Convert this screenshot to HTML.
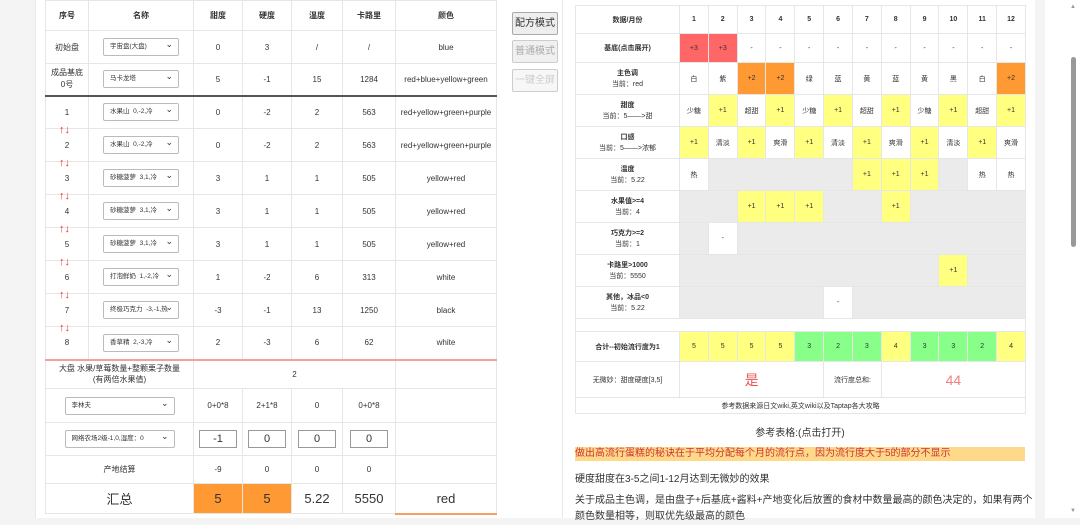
<!DOCTYPE html>
<html><head><meta charset="utf-8"><style>
*{box-sizing:border-box;margin:0;padding:0}
body{width:1080px;height:518px;overflow:hidden;background:#f4f4f4;font-family:"Liberation Sans","Noto Sans CJK SC",sans-serif;color:#333;position:relative}
.panel{position:absolute;background:#fff}
table{border-collapse:collapse;table-layout:fixed;position:absolute}
td{border:1px solid #e6e6e6;text-align:center;font-size:8px;padding:0;overflow:hidden;white-space:nowrap}
.sel{display:inline-block;width:76px;height:18px;border:1px solid #bbb;border-radius:2px;font-size:6.5px;text-align:left;padding-left:6px;line-height:16px;position:relative;background:#fff;color:#333}
.sel:after{content:"⌄";position:absolute;right:5px;top:-3px;font-size:9px}
.arr{position:absolute;left:59px;color:#e33;font-size:11px;line-height:11px}
.inp{display:inline-block;width:38px;height:18px;border:1px solid #999;font-size:11px;line-height:16px}
.y{background:#ffff80}.o{background:#ff9933}.r{background:#ff6666}.g{background:#88ff88}.gr{background:#ebebeb}
.btn{position:absolute;left:512px;width:46px;height:23px;border:1px solid #ccc;background:#f0f0f0;font-size:10px;text-align:center;line-height:21px;color:#aaa;border-radius:2px}
b{font-weight:bold}
.rt td{font-size:7px}
</style></head><body>
<div class="panel" style="left:35px;top:0;width:470px;height:518px;border-left:1px solid #e8e8e8"></div>
<div class="panel" style="left:505px;top:0;width:530px;height:518px"></div>
<div style="position:absolute;left:562px;top:0;width:1px;height:518px;background:#e8e8e8"></div>
<div class="panel" style="left:1045px;top:0;width:35px;height:518px"></div>
<div style="position:absolute;left:1071px;top:57px;width:5px;height:190px;background:#999;border-radius:3px"></div>
<div style="position:absolute;left:1070px;top:4px;font-size:6px;color:#999">▲</div>
<div style="position:absolute;left:1070px;top:508px;font-size:6px;color:#999">▼</div>

<table style="left:45px;top:0;width:451px">
<colgroup><col style="width:43px"><col style="width:105px"><col style="width:49px"><col style="width:49px"><col style="width:51px"><col style="width:53px"><col style="width:101px"></colgroup>
<tr style="height:30px"><td><b>序号</b></td><td><b>名称</b></td><td><b>甜度</b></td><td><b>硬度</b></td><td><b>温度</b></td><td><b>卡路里</b></td><td><b>颜色</b></td></tr>
<tr style="height:33px"><td>初始盘</td><td><span class="sel">宇宙盘(大盘)</span></td><td>0</td><td>3</td><td>/</td><td>/</td><td>blue</td></tr>
<tr style="height:32px;border-bottom:2px solid #555"><td style="line-height:12px">成品基底<br>0号</td><td><span class="sel">马卡龙塔</span></td><td>5</td><td>-1</td><td>15</td><td>1284</td><td>red+blue+yellow+green</td></tr>
<tr style="height:33px"><td>1</td><td><span class="sel">水果山&nbsp; 0,-2,冷</span></td><td>0</td><td>-2</td><td>2</td><td>563</td><td>red+yellow+green+purple</td></tr>
<tr style="height:33px"><td>2</td><td><span class="sel">水果山&nbsp; 0,-2,冷</span></td><td>0</td><td>-2</td><td>2</td><td>563</td><td>red+yellow+green+purple</td></tr>
<tr style="height:33px"><td>3</td><td><span class="sel">砂糖菠萝&nbsp; 3,1,冷</span></td><td>3</td><td>1</td><td>1</td><td>505</td><td>yellow+red</td></tr>
<tr style="height:33px"><td>4</td><td><span class="sel">砂糖菠萝&nbsp; 3,1,冷</span></td><td>3</td><td>1</td><td>1</td><td>505</td><td>yellow+red</td></tr>
<tr style="height:33px"><td>5</td><td><span class="sel">砂糖菠萝&nbsp; 3,1,冷</span></td><td>3</td><td>1</td><td>1</td><td>505</td><td>yellow+red</td></tr>
<tr style="height:33px"><td>6</td><td><span class="sel">打泡鲜奶&nbsp; 1,-2,冷</span></td><td>1</td><td>-2</td><td>6</td><td>313</td><td>white</td></tr>
<tr style="height:33px"><td>7</td><td><span class="sel">终极巧克力&nbsp; -3,-1,热</span></td><td>-3</td><td>-1</td><td>13</td><td>1250</td><td>black</td></tr>
<tr style="height:33px;border-bottom:2px solid #f4a0a0"><td>8</td><td><span class="sel">香草精&nbsp; 2,-3,冷</span></td><td>2</td><td>-3</td><td>6</td><td>62</td><td>white</td></tr>
<tr style="height:29px"><td colspan="2" style="line-height:11px">大盘 水果/草莓数量+整颗栗子数量<br>(有两倍水果值)</td><td colspan="4">2</td><td></td></tr>
<tr style="height:34px"><td colspan="2"><span class="sel" style="width:110px">李林夫</span></td><td>0+0*8</td><td>2+1*8</td><td>0</td><td>0+0*8</td><td></td></tr>
<tr style="height:33px"><td colspan="2"><span class="sel" style="width:110px">网络农场2级-1,0,湿度：0</span></td><td><span class="inp">-1</span></td><td><span class="inp">0</span></td><td><span class="inp">0</span></td><td><span class="inp">0</span></td><td></td></tr>
<tr style="height:28px"><td colspan="2">产地结算</td><td>-9</td><td>0</td><td>0</td><td>0</td><td></td></tr>
<tr style="height:30px"><td colspan="2" style="font-size:13px">汇总</td><td class="o" style="font-size:13px">5</td><td class="o" style="font-size:13px">5</td><td style="font-size:13px">5.22</td><td style="font-size:13px">5550</td><td style="font-size:13px;border-bottom:2px solid #f4a060">red</td></tr>
</table>
<div class="arr" style="top:125px">↑↓</div><div class="arr" style="top:158px">↑↓</div><div class="arr" style="top:191px">↑↓</div><div class="arr" style="top:224px">↑↓</div><div class="arr" style="top:257px">↑↓</div><div class="arr" style="top:290px">↑↓</div><div class="arr" style="top:323px">↑↓</div>

<div class="btn" style="top:12px;color:#333;background:#eee;border-color:#aaa">配方模式</div>
<div class="btn" style="top:40px">普通模式</div>
<div class="btn" style="top:69px;background:#f7f7f7;color:#ccc">一键全屏</div>

<table class="rt" style="left:575px;top:5px;width:450px">
<colgroup><col style="width:104px"><col span="12" style="width:28.83px"></colgroup>
<tr style="height:28px"><td><b>数据/月份</b></td><td><b>1</b></td><td><b>2</b></td><td><b>3</b></td><td><b>4</b></td><td><b>5</b></td><td><b>6</b></td><td><b>7</b></td><td><b>8</b></td><td><b>9</b></td><td><b>10</b></td><td><b>11</b></td><td><b>12</b></td></tr>
<tr style="height:29px"><td><b>基底(点击展开)</b></td><td class="r">+3</td><td class="r">+3</td><td>-</td><td>-</td><td>-</td><td>-</td><td>-</td><td>-</td><td>-</td><td>-</td><td>-</td><td>-</td></tr>
<tr style="height:32px"><td style="line-height:11px"><b>主色调</b><br>当前：red</td><td>白</td><td>紫</td><td class="o">+2</td><td class="o">+2</td><td>绿</td><td>蓝</td><td>黄</td><td>蓝</td><td>黄</td><td>黑</td><td>白</td><td class="o">+2</td></tr>
<tr style="height:32px"><td style="line-height:11px"><b>甜度</b><br>当前：5——&gt;甜</td><td>少糖</td><td class="y">+1</td><td>超甜</td><td class="y">+1</td><td>少糖</td><td class="y">+1</td><td>超甜</td><td class="y">+1</td><td>少糖</td><td class="y">+1</td><td>超甜</td><td class="y">+1</td></tr>
<tr style="height:32px"><td style="line-height:11px"><b>口感</b><br>当前：5——&gt;浓郁</td><td class="y">+1</td><td>清淡</td><td class="y">+1</td><td>爽滑</td><td class="y">+1</td><td>清淡</td><td class="y">+1</td><td>爽滑</td><td class="y">+1</td><td>清淡</td><td class="y">+1</td><td>爽滑</td></tr>
<tr style="height:32px"><td style="line-height:11px"><b>温度</b><br>当前：5.22</td><td>热</td><td class="gr" colspan="5"></td><td class="y">+1</td><td class="y">+1</td><td class="y">+1</td><td class="gr"></td><td>热</td><td>热</td></tr>
<tr style="height:32px"><td style="line-height:11px"><b>水果值&gt;=4</b><br>当前：4</td><td class="gr" colspan="2"></td><td class="y">+1</td><td class="y">+1</td><td class="y">+1</td><td class="gr" colspan="2"></td><td class="y">+1</td><td class="gr" colspan="4"></td></tr>
<tr style="height:32px"><td style="line-height:11px"><b>巧克力&gt;=2</b><br>当前：1</td><td class="gr"></td><td>-</td><td class="gr" colspan="10"></td></tr>
<tr style="height:32px"><td style="line-height:11px"><b>卡路里&gt;1000</b><br>当前：5550</td><td class="gr" colspan="9"></td><td class="y">+1</td><td class="gr" colspan="2"></td></tr>
<tr style="height:32px"><td style="line-height:11px"><b>其他，冰品&lt;0</b><br>当前：5.22</td><td class="gr" colspan="5"></td><td>-</td><td class="gr" colspan="6"></td></tr>
<tr style="height:13px"><td colspan="13"></td></tr>
<tr style="height:30px"><td><b>合计--初始流行度为1</b></td><td class="y">5</td><td class="y">5</td><td class="y">5</td><td class="y">5</td><td class="g">3</td><td class="g">2</td><td class="g">3</td><td class="y">4</td><td class="g">3</td><td class="g">3</td><td class="g">2</td><td class="y">4</td></tr>
<tr style="height:36px"><td>无微妙：甜度硬度[3,5]</td><td colspan="5" style="font-size:14px;color:#e55">是</td><td colspan="2">流行度总和:</td><td colspan="5" style="font-size:14px;color:#f08080">44</td></tr>
<tr style="height:16px"><td colspan="13">参考数据来源日文wiki,英文wiki以及Taptap各大攻略</td></tr>
</table>

<div style="position:absolute;left:575px;top:424px;width:450px;text-align:center;font-size:10px">参考表格:(点击打开)</div>
<div style="position:absolute;left:575px;top:447px;width:450px;height:14px;background:#ffd98a;color:#c33;font-size:10px;line-height:14px">做出高流行蛋糕的秘诀在于平均分配每个月的流行点，因为流行度大于5的部分不显示</div>
<div style="position:absolute;left:575px;top:470px;font-size:10px">硬度甜度在3-5之间1-12月达到无微妙的效果</div>
<div style="position:absolute;left:575px;top:493px;width:462px;font-size:10px;line-height:16px">关于成品主色调，是由盘子+后基底+酱料+产地变化后放置的食材中数量最高的颜色决定的，如果有两个颜色数量相等，则取优先级最高的颜色</div>
</body></html>
